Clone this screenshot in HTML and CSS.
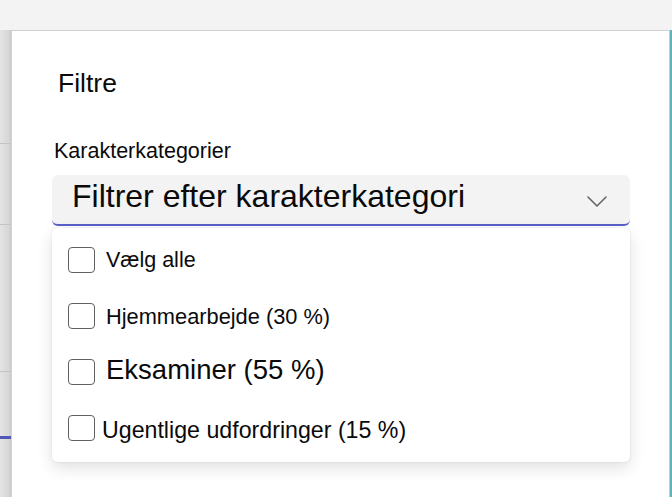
FILE: index.html
```html
<!DOCTYPE html>
<html lang="da">
<head>
<meta charset="utf-8">
<title>Filtre</title>
<link rel="stylesheet" href="styles.css">
</head>
<body>
  <div class="topbar"></div>
  <div class="stage">
    <div class="backdrop">
      <div class="bd-row bd-row-1"></div>
      <div class="bd-row bd-row-2"></div>
      <div class="bd-row bd-row-3"></div>
      <div class="bd-accent"></div>
    </div>
    <section class="panel">
      <h2 class="panel-title">Filtre</h2>
      <label class="field-label">Karakterkategorier</label>
      <div class="combo">
        <span class="combo-placeholder">Filtrer efter karakterkategori</span>
        <svg class="combo-chevron" width="20" height="11" viewBox="0 0 20 11" aria-hidden="true">
          <path d="M1 1 L10 10 L19 1" fill="none" stroke="#616161" stroke-width="1.5" stroke-linecap="round" stroke-linejoin="round"/>
        </svg>
      </div>
      <ul class="options">
        <li class="option opt-all"><span class="check"></span><span class="opt-text">Vælg alle</span></li>
        <li class="option opt-home"><span class="check"></span><span class="opt-text">Hjemmearbejde (30 %)</span></li>
        <li class="option opt-exam"><span class="check"></span><span class="opt-text">Eksaminer (55 %)</span></li>
        <li class="option opt-week"><span class="check"></span><span class="opt-text">Ugentlige udfordringer (15 %)</span></li>
      </ul>
    </section>
    <div class="edge"></div>
  </div>
</body>
</html>
```
FILE: styles.css
```css
* { box-sizing: border-box; }

html, body {
  margin: 0;
  height: 100%;
}

body {
  background: #f3f3f3;
  font-family: "Liberation Sans", Arial, sans-serif;
  color: #0a0a0a;
  display: flex;
  flex-direction: column;
  overflow: hidden;
}

.topbar {
  height: 30px;
  flex: none;
  background: #f3f3f3;
}

.stage {
  flex: 1;
  display: flex;
  min-height: 0;
}

/* dimmed page content peeking out on the left */
.backdrop {
  width: 11px;
  flex: none;
  background: linear-gradient(90deg, #e4e4e4 0%, #d6d6d6 80%, #cbcbcb 100%);
  display: flex;
  flex-direction: column;
}

.bd-row {
  flex: none;
  border-bottom: 1px solid #c4c4c4;
}
.bd-row-1 { height: 114px; }
.bd-row-2 { height: 81px; }
.bd-row-3 { height: 147px; }

.bd-accent {
  margin-top: 64px;
  height: 3px;
  background: #5357b5;
}

.panel {
  flex: 1;
  background: #fff;
  border-top: 1px solid #d1d1d1;
  border-left: 1px solid #d1d1d1;
  border-right: 1px solid #c9c9c9;
  padding: 37px 39px 0 40px;
  display: flex;
  flex-direction: column;
}

.edge {
  width: 2px;
  flex: none;
  background: #5fb3b9;
}

.panel-title {
  margin: 0;
  font-size: 26.5px;
  line-height: 30px;
  font-weight: normal;
  padding-left: 6px;
}

.field-label {
  margin-top: 40px;
  font-size: 21.5px;
  line-height: 26px;
  padding-left: 2px;
}

.combo {
  margin-top: 11px;
  height: 51px;
  background: #f3f3f3;
  border-radius: 6px;
  border-bottom: 2px solid #5b5fc7;
  display: flex;
  align-items: center;
  padding: 0 23px 0 20px;
}

.combo-placeholder {
  flex: 1;
  font-size: 32px;
  line-height: 37px;
  margin-bottom: 6px;
  white-space: nowrap;
}

.combo-chevron {
  flex: none;
  margin-top: 3px;
}

.options {
  list-style: none;
  margin: 2px 0 0;
  padding: 4px 16px 6px;
  background: #fff;
  border-radius: 6px;
  box-shadow: 0 6px 16px rgba(0, 0, 0, 0.12), 0 0 3px rgba(0, 0, 0, 0.08);
}

.option {
  height: 56px;
  display: flex;
  align-items: center;
  gap: 11px;
  white-space: nowrap;
}

.check {
  width: 27px;
  height: 26px;
  flex: none;
  border: 1.5px solid #616161;
  border-radius: 4px;
  background: #fff;
}

.opt-text { line-height: 1.2; }

.opt-all .opt-text { font-size: 21.5px; margin-top: 2px; }
.opt-home .opt-text { font-size: 21.8px; margin-top: 3px; }
.opt-exam .opt-text { font-size: 27.5px; margin-top: -6px; }
.opt-week { gap: 7px; }
.opt-week .opt-text { font-size: 23.2px; margin-top: 5px; }
```
